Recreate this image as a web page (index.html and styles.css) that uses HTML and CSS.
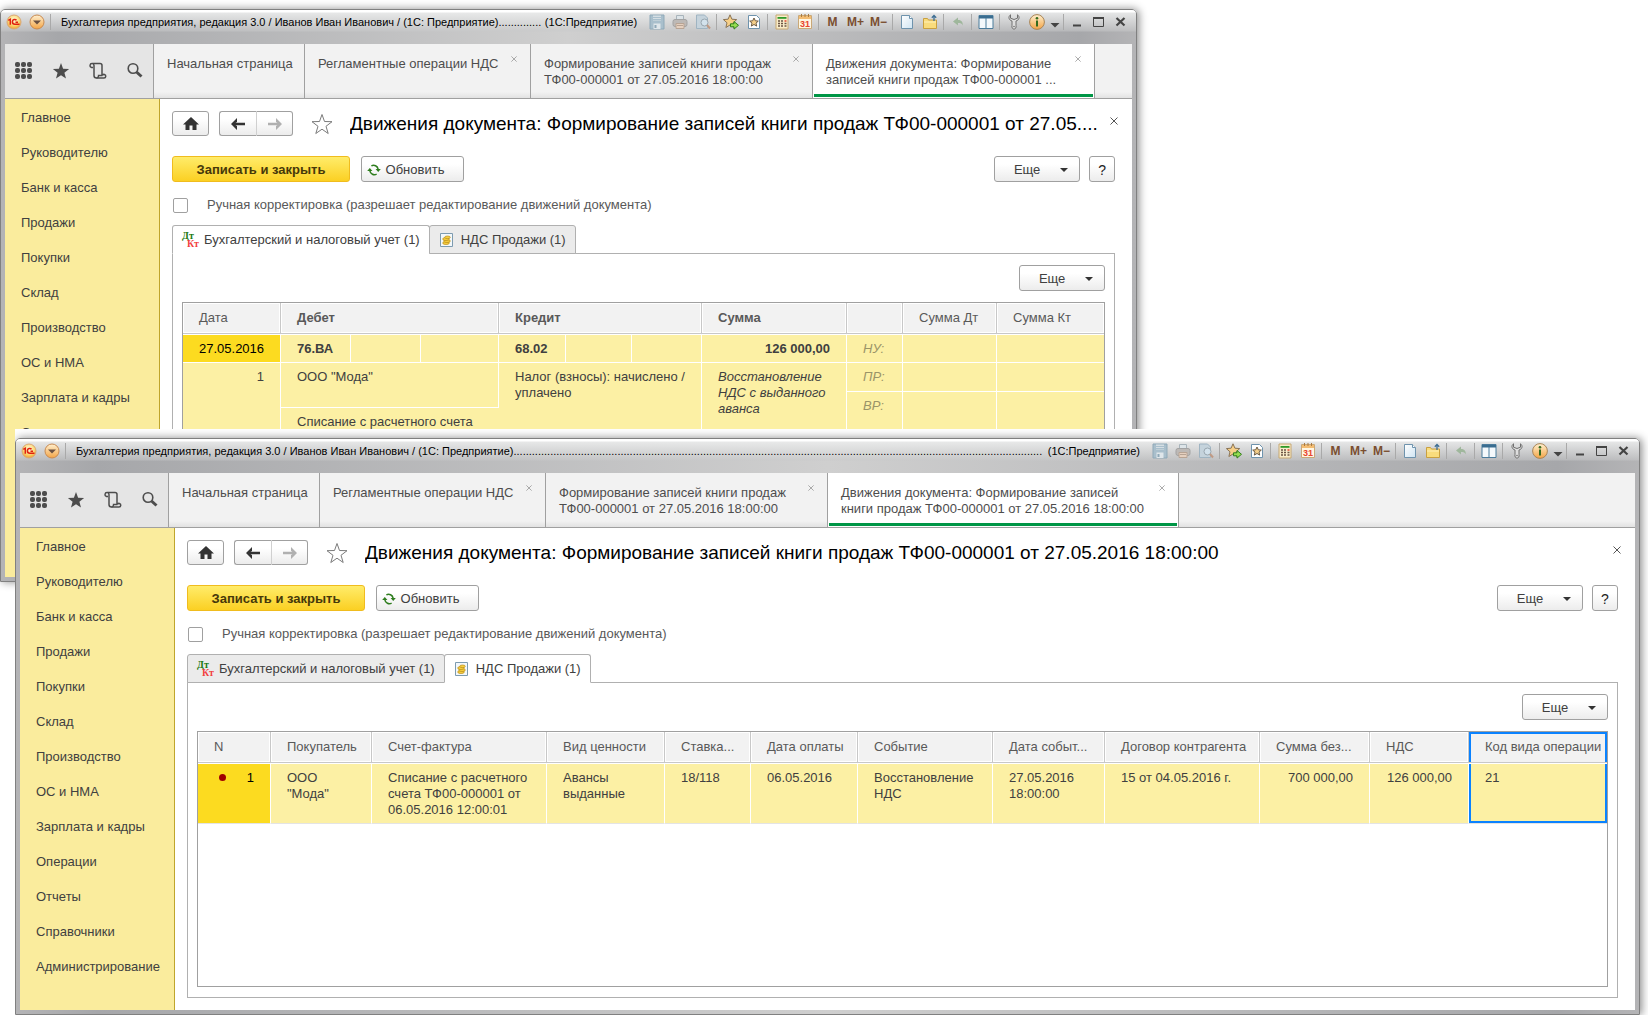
FILE: index.html
```html
<!DOCTYPE html>
<html lang="ru">
<head>
<meta charset="utf-8">
<title>Бухгалтерия предприятия</title>
<link rel="stylesheet" href="styles.css">
</head>
<body>
<svg class="sprite" aria-hidden="true">
  <defs>
    <radialGradient id="g-gold" cx="50%" cy="35%" r="65%"><stop offset="0" stop-color="#fffbe0"/><stop offset=".6" stop-color="#fbd873"/><stop offset="1" stop-color="#f0a030"/></radialGradient>
    <linearGradient id="g-orange" x1="0" y1="0" x2="0" y2="1"><stop offset="0" stop-color="#fff0d0"/><stop offset="1" stop-color="#f3a445"/></linearGradient>
    <linearGradient id="g-page" x1="0" y1="0" x2="1" y2="1"><stop offset="0" stop-color="#fff"/><stop offset="1" stop-color="#cfe4f2"/></linearGradient>
  </defs>
  <symbol id="i-logo" viewBox="0 0 16 16"><circle cx="8" cy="8" r="7" fill="url(#g-gold)" stroke="#d9a878"/><path d="M2.300 6.300 4.300 5.200v5.600M10.500 6.300C9.300 4.900 6.400 5.300 6.400 7.800c0 1.900 1.300 2.500 2.400 2.500H13.500M9.500 8.200H12" fill="none" stroke="#e02010" stroke-width="1.500"/></symbol>
  <symbol id="i-menu" viewBox="0 0 16 16"><circle cx="8" cy="8" r="7" fill="url(#g-orange)" stroke="#c98a50"/><path d="M4 6.500h8l-4 4z" fill="#6b5040"/></symbol>
  <symbol id="i-save" viewBox="0 0 16 16"><path d="M1 1h14v14H1z" fill="#a9bfcc" stroke="#8fa9b8"/><path d="M4 1.500h8v5H4z" fill="#d5dee3"/><path d="M4 3.500h8M4 5.500h8" stroke="#a9bfcc"/><path d="M4.500 9.500h7V15h-7z" fill="#dfe6ea"/><path d="M5.500 11h2v3h-2z" fill="#8fa9b8"/></symbol>
  <symbol id="i-print" viewBox="0 0 16 16"><path d="M4.500 1.500h7V6h-7z" fill="#dde4e8" stroke="#a8b4bb"/><rect x="1" y="5.500" width="14" height="7" rx="2" fill="#bdb9b6" stroke="#a3a3a3"/><path d="M4 9.500h8v5H4z" fill="#e5d0bf" stroke="#b8a494"/><path d="M5 11.500h6" stroke="#b8a494"/></symbol>
  <symbol id="i-preview" viewBox="0 0 16 16"><path d="M1.500 1h8l3 3v10.500h-11z" fill="#c5d3dc" stroke="#9fb4c2"/><circle cx="9.500" cy="8.500" r="3.500" fill="#d3e2ec" stroke="#9aa7b0"/><path d="m12 11 3 3.500" stroke="#c09a84" stroke-width="2"/></symbol>
  <symbol id="i-favadd" viewBox="0 0 16 16"><path d="m7 .8 1.900 4.400 4.800.4-3.600 3.200 1.100 4.700L7 11l-4.100 2.500L4 8.800.4 5.600l4.700-.4z" fill="#f7cf87" stroke="#8a7455"/><path d="M7.500 9.800h3.500V7.500l4.500 3.800-4.500 3.800v-2.300H7.500z" fill="#96dd52" stroke="#32801c"/></symbol>
  <symbol id="i-fav" viewBox="0 0 16 16"><path d="M2.500 1.500h8l3 3v10h-11z" fill="#fff" stroke="#6e93ad"/><path d="m8 4 1.300 2.800 3 .3-2.300 2 .7 3L8 10.500 5.300 12.100l.7-3-2.300-2 3-.3z" fill="#f4cf8a" stroke="#6b5a44"/></symbol>
  <symbol id="i-calc" viewBox="0 0 16 16"><path d="M2 1h12v14H2z" fill="#f9ecc9" stroke="#c7a873"/><path d="M3.500 3h9v1.800h-9z" fill="#2f9a28"/><path d="M4 7h2M4 9.500h2M4 12h2M7 7h2M7 9.500h2M7 12h2" stroke="#6b5444" stroke-width="1.400"/><path d="M10.500 7h2" stroke="#e03a20" stroke-width="1.400"/><path d="M10.500 9.500h2M10.500 12h2" stroke="#6b5444" stroke-width="1.400"/></symbol>
  <symbol id="i-cal" viewBox="0 0 16 16"><path d="M1.500 1.500h13v13h-13z" fill="#fff6e2" stroke="#c9a878"/><path d="M2 2h12v3H2z" fill="#f4bd72"/><path d="M4.500 0v3M8 0v3M11.500 0v3" stroke="#aa7a40"/><text x="8" y="13" text-anchor="middle" class="icon-day">31</text></symbol>
  <symbol id="i-page" viewBox="0 0 16 16"><path d="M2.500 1.500h8l3 3v10h-11z" fill="url(#g-page)" stroke="#6e93ad"/><path d="M10.500 1.500v3h3" fill="#fff" stroke="#6e93ad"/></symbol>
  <symbol id="i-folder" viewBox="0 0 16 16"><path d="M1.500 4.500h4l1 1.500h8v8.500h-13z" fill="#f9dc7c" stroke="#c9a040"/><path d="M2 8h12" stroke="#fff0b8"/><path d="M12 7V1.500M9.800 3.800 12 1.500l2.200 2.300" fill="none" stroke="#3f6f94" stroke-width="1.300"/></symbol>
  <symbol id="i-undo" viewBox="0 0 16 16"><path d="M3 7.500 8 3.500v2.500c3 0 5 1.500 4.800 5.500C12 9.500 10.500 9 8 9v2.500z" fill="#9fb79c"/></symbol>
  <symbol id="i-cols" viewBox="0 0 16 16"><path d="M1 1.500h14v13H1z" fill="#f4f9fc" stroke="#4b7c9c"/><path d="M1 2h14v2.500H1z" fill="#3a6d90"/><path d="M8 4v10.500" stroke="#4b7c9c"/></symbol>
  <symbol id="i-wrench" viewBox="0 0 16 16"><path d="M4.500.8C2 2.500 2.500 6 6 7v4.500c-.6 2 .8 3.700 2 3.700s2.600-1.700 2-3.700V7c3.500-1 4-4.500 1.500-6.200v3.400L8 5.500 4.500 4.200z" fill="#dedede" stroke="#707070"/><circle cx="8" cy="12.500" r=".8" fill="#707070"/></symbol>
  <symbol id="i-info" viewBox="0 0 16 16"><circle cx="8" cy="8" r="7.400" fill="url(#g-orange)" stroke="#a88558"/><circle cx="8" cy="4.300" r="1.300" fill="#346b1e"/><path d="M8 6.500v6" stroke="#346b1e" stroke-width="2"/></symbol>
  <symbol id="i-more" viewBox="0 0 16 16"><path d="M3.500 9h9L8 13.500z" fill="#444"/></symbol>
  <symbol id="i-min" viewBox="0 0 16 16"><path d="M4 11.500h8" stroke="#444" stroke-width="2"/></symbol>
  <symbol id="i-max" viewBox="0 0 16 16"><path d="M2.500 3.500h10v9h-10z" fill="none" stroke="#444"/><path d="M2 4h11" stroke="#444" stroke-width="2"/></symbol>
  <symbol id="i-x" viewBox="0 0 16 16"><path d="m3.500 4 8 7.500m0-7.500-8 7.500" stroke="#444" stroke-width="2.200"/></symbol>
  <symbol id="i-grid" viewBox="0 0 18 18"><g fill="#4d4d4d"><rect x="0" y="0" width="5" height="5" rx="2"/><rect x="6" y="0" width="5" height="5" rx="2"/><rect x="12" y="0" width="5" height="5" rx="2"/><rect x="0" y="6" width="5" height="5" rx="2"/><rect x="6" y="6" width="5" height="5" rx="2"/><rect x="12" y="6" width="5" height="5" rx="2"/><rect x="0" y="12" width="5" height="5" rx="2"/><rect x="6" y="12" width="5" height="5" rx="2"/><rect x="12" y="12" width="5" height="5" rx="2"/></g></symbol>
  <symbol id="i-star" viewBox="0 0 18 18"><path d="m9 1 2.100 5.700 6 .2-4.700 3.800 1.600 5.900L9 13.200l-5 3.400 1.600-5.900L.9 6.900l6-.2z" fill="#4d4d4d"/></symbol>
  <symbol id="i-scroll" viewBox="0 0 18 18"><path d="M4 5.500H2.500a2 2 0 1 1 2.500-2V13.500a2.500 2.500 0 0 0 2.500 2.500h7.500a1.800 1.800 0 1 0-1.700-2.500M3.500 1.500H11a2 2 0 0 1 2 2V13" fill="none" stroke="#4d4d4d" stroke-width="1.500"/><path d="M7.500 16a2.300 2.300 0 0 0 2-2.500h4" fill="none" stroke="#4d4d4d" stroke-width="1.300"/></symbol>
  <symbol id="i-find" viewBox="0 0 18 18"><circle cx="7" cy="6.500" r="4.800" fill="none" stroke="#4d4d4d" stroke-width="1.600"/><path d="m10.500 10 5 4.500" stroke="#4d4d4d" stroke-width="3"/></symbol>
  <symbol id="i-home" viewBox="0 0 16 14"><path d="M8 0 16 7.500H13.500V13H9.500V8.500h-3V13h-4V7.500H0z" fill="#333"/></symbol>
  <symbol id="i-back" viewBox="0 0 16 14"><path d="M7 1 1 7l6 6V9L5.500 8.200H15V5.800H5.500L7 5z" fill="#333"/></symbol>
  <symbol id="i-forward" viewBox="0 0 16 14"><path d="m9 1 6 6-6 6V9l1.500-.8H1V5.800h9.500L9 5z" fill="#b0b0b0"/></symbol>
  <symbol id="i-outline" viewBox="0 0 22 22"><path d="m11 1.500 2.500 7 7.500.2-6 4.600 2.200 7.200-6.200-4.300-6.200 4.300L7 13.300 1 8.700l7.500-.2z" fill="#fff" stroke="#7a7a7a"/></symbol>
  <symbol id="i-refresh" viewBox="0 0 16 14"><g fill="none" stroke="#2e7d1e" stroke-width="1.700"><path d="M5 2.300A5.200 5.200 0 0 1 12.700 6M11 11.700A5.200 5.200 0 0 1 3.300 8"/></g><path d="M9.800 5.800H15.800L12.800 9.300zM.2 8.200H6.200L3.200 4.700z" fill="#2e7d1e"/></symbol>
  <symbol id="i-dtkt" viewBox="0 0 18 16"><text x="0" y="7" class="icon-dt">Дт</text><text x="5" y="15" class="icon-kt">Кт</text></symbol>
  <symbol id="i-coins" viewBox="0 0 14 14"><path d="M.5.500h12v13H.500z" fill="#f3f8fb" stroke="#7d9bb0"/><g fill="#f7d040" stroke="#b88a18" stroke-width=".7"><ellipse cx="6" cy="10" rx="3.300" ry="1.500"/><ellipse cx="7" cy="8" rx="3.300" ry="1.500"/><ellipse cx="6" cy="6" rx="3.300" ry="1.500"/><ellipse cx="7.500" cy="4.300" rx="2.800" ry="1.300"/></g></symbol>
  <symbol id="i-close" viewBox="0 0 8 8"><path d="m.5.500 7 7m0-7-7 7" stroke="currentColor"/></symbol>
</svg>

<main class="desktop">

<section class="window window--back">
  <header class="titlebar">
    <button class="tool" aria-label="1С"><svg><use href="#i-logo"/></svg></button>
    <button class="tool" aria-label="Меню"><svg><use href="#i-menu"/></svg></button>
    <span class="sep"></span>
    <span class="caption">Бухгалтерия предприятия, редакция 3.0 / Иванов Иван Иванович / (1С: Предприятие)..............</span>
    <span class="product">(1С:Предприятие)</span>
    <button class="tool" aria-label="Сохранить" disabled><svg><use href="#i-save"/></svg></button>
    <button class="tool" aria-label="Печать" disabled><svg><use href="#i-print"/></svg></button>
    <button class="tool" aria-label="Просмотр" disabled><svg><use href="#i-preview"/></svg></button>
    <span class="sep"></span>
    <button class="tool" aria-label="Добавить в избранное"><svg><use href="#i-favadd"/></svg></button>
    <button class="tool" aria-label="Избранное"><svg><use href="#i-fav"/></svg></button>
    <span class="sep"></span>
    <button class="tool" aria-label="Калькулятор"><svg><use href="#i-calc"/></svg></button>
    <button class="tool" aria-label="Календарь"><svg><use href="#i-cal"/></svg></button>
    <span class="sep"></span>
    <button class="tool">M</button>
    <button class="tool">M+</button>
    <button class="tool">M−</button>
    <span class="sep"></span>
    <button class="tool" aria-label="Новый"><svg><use href="#i-page"/></svg></button>
    <button class="tool" aria-label="Открыть"><svg><use href="#i-folder"/></svg></button>
    <span class="sep"></span>
    <button class="tool" aria-label="Отменить" disabled><svg><use href="#i-undo"/></svg></button>
    <span class="sep"></span>
    <button class="tool" aria-label="Панели"><svg><use href="#i-cols"/></svg></button>
    <span class="sep"></span>
    <button class="tool" aria-label="Настройка"><svg><use href="#i-wrench"/></svg></button>
    <button class="tool" aria-label="Справка"><svg><use href="#i-info"/></svg></button>
    <button class="tool tool--narrow" aria-label="Ещё"><svg><use href="#i-more"/></svg></button>
    <span class="sep"></span>
    <button class="tool tool--frame" aria-label="Свернуть"><svg><use href="#i-min"/></svg></button>
    <button class="tool tool--frame" aria-label="Развернуть"><svg><use href="#i-max"/></svg></button>
    <button class="tool tool--frame" aria-label="Закрыть"><svg><use href="#i-x"/></svg></button>
  </header>

  <div class="client">
    <div class="strip">
      <div class="quick">
        <button aria-label="Разделы"><svg><use href="#i-grid"/></svg></button>
        <button aria-label="Избранное"><svg><use href="#i-star"/></svg></button>
        <button aria-label="История"><svg><use href="#i-scroll"/></svg></button>
        <button aria-label="Поиск"><svg><use href="#i-find"/></svg></button>
      </div>
      <div class="tab tab--start">Начальная страница</div>
      <div class="tab tab--short">Регламентные операции НДС<button class="tab-close" aria-label="Закрыть"><svg><use href="#i-close"/></svg></button></div>
      <div class="tab tab--doc">Формирование записей книги продаж<br>ТФ00-000001 от 27.05.2016 18:00:00<button class="tab-close" aria-label="Закрыть"><svg><use href="#i-close"/></svg></button></div>
      <div class="tab tab--doc tab--active">Движения документа: Формирование<br>записей книги продаж ТФ00-000001 ...<button class="tab-close" aria-label="Закрыть"><svg><use href="#i-close"/></svg></button></div>
    </div>
    <div class="work">
      <nav class="sections">
        <a href="#">Главное</a>
        <a href="#">Руководителю</a>
        <a href="#">Банк и касса</a>
        <a href="#">Продажи</a>
        <a href="#">Покупки</a>
        <a href="#">Склад</a>
        <a href="#">Производство</a>
        <a href="#">ОС и НМА</a>
        <a href="#">Зарплата и кадры</a>
        <a href="#">Операции</a>
      </nav>
      <div class="form">
        <div class="form-head">
          <button class="btn btn--nav" aria-label="Домой"><svg><use href="#i-home"/></svg></button>
          <div class="pair">
            <button class="btn btn--nav" aria-label="Назад"><svg><use href="#i-back"/></svg></button>
            <button class="btn btn--nav" aria-label="Вперед" disabled><svg><use href="#i-forward"/></svg></button>
          </div>
          <button class="star" aria-label="В избранное"><svg><use href="#i-outline"/></svg></button>
          <h1>Движения документа: Формирование записей книги продаж ТФ00-000001 от 27.05....</h1>
          <button class="form-close" aria-label="Закрыть"><svg><use href="#i-close"/></svg></button>
        </div>
        <div class="commands">
          <button class="btn btn--primary">Записать и закрыть</button>
          <button class="btn btn--refresh"><svg><use href="#i-refresh"/></svg>Обновить</button>
          <button class="btn btn--more">Еще</button>
          <button class="btn btn--help">?</button>
        </div>
        <label class="manual"><input type="checkbox">Ручная корректировка (разрешает редактирование движений документа)</label>
        <div class="pages">
          <button class="page page--active"><svg class="ic-dtkt"><use href="#i-dtkt"/></svg>Бухгалтерский и налоговый учет (1)</button>
          <button class="page"><svg class="ic-coins"><use href="#i-coins"/></svg>НДС Продажи (1)</button>
        </div>
        <div class="panel">
          <button class="btn btn--more">Еще</button>
          <div class="grid-box">
            <table class="grid entries">
              <colgroup><col><col><col><col><col><col><col><col><col><col><col></colgroup>
              <thead>
                <tr><th>Дата</th><th colspan="3" class="strong">Дебет</th><th colspan="3" class="strong">Кредит</th><th class="strong">Сумма</th><th></th><th>Сумма Дт</th><th>Сумма Кт</th></tr>
              </thead>
              <tbody>
                <tr><td class="current">27.05.2016</td><td class="strong">76.ВА</td><td></td><td></td><td class="strong">68.02</td><td></td><td></td><td class="strong num">126 000,00</td><td class="hint">НУ:</td><td></td><td></td></tr>
                <tr class="short"><td rowspan="3" class="num">1</td><td colspan="3" rowspan="2" class="analytic">ООО "Мода"</td><td colspan="3" rowspan="3">Налог (взносы): начислено / уплачено</td><td rowspan="3" class="note">Восстановление НДС с выданного аванса</td><td class="hint">ПР:</td><td></td><td></td></tr>
                <tr class="thin"><td rowspan="2" class="hint">ВР:</td><td rowspan="2"></td><td rowspan="2"></td></tr>
                <tr class="tall"><td colspan="3">Списание с расчетного счета</td></tr>
              </tbody>
            </table>
          </div>
        </div>
      </div>
    </div>
  </div>
</section>

<div class="overlay">
<section class="window window--front">
  <header class="titlebar">
    <button class="tool" aria-label="1С"><svg><use href="#i-logo"/></svg></button>
    <button class="tool" aria-label="Меню"><svg><use href="#i-menu"/></svg></button>
    <span class="sep"></span>
    <span class="caption">Бухгалтерия предприятия, редакция 3.0 / Иванов Иван Иванович / (1С: Предприятие).............................................................................................................................................................................</span>
    <span class="product">(1С:Предприятие)</span>
    <button class="tool" aria-label="Сохранить" disabled><svg><use href="#i-save"/></svg></button>
    <button class="tool" aria-label="Печать" disabled><svg><use href="#i-print"/></svg></button>
    <button class="tool" aria-label="Просмотр" disabled><svg><use href="#i-preview"/></svg></button>
    <span class="sep"></span>
    <button class="tool" aria-label="Добавить в избранное"><svg><use href="#i-favadd"/></svg></button>
    <button class="tool" aria-label="Избранное"><svg><use href="#i-fav"/></svg></button>
    <span class="sep"></span>
    <button class="tool" aria-label="Калькулятор"><svg><use href="#i-calc"/></svg></button>
    <button class="tool" aria-label="Календарь"><svg><use href="#i-cal"/></svg></button>
    <span class="sep"></span>
    <button class="tool">M</button>
    <button class="tool">M+</button>
    <button class="tool">M−</button>
    <span class="sep"></span>
    <button class="tool" aria-label="Новый"><svg><use href="#i-page"/></svg></button>
    <button class="tool" aria-label="Открыть"><svg><use href="#i-folder"/></svg></button>
    <span class="sep"></span>
    <button class="tool" aria-label="Отменить" disabled><svg><use href="#i-undo"/></svg></button>
    <span class="sep"></span>
    <button class="tool" aria-label="Панели"><svg><use href="#i-cols"/></svg></button>
    <span class="sep"></span>
    <button class="tool" aria-label="Настройка"><svg><use href="#i-wrench"/></svg></button>
    <button class="tool" aria-label="Справка"><svg><use href="#i-info"/></svg></button>
    <button class="tool tool--narrow" aria-label="Ещё"><svg><use href="#i-more"/></svg></button>
    <span class="sep"></span>
    <button class="tool tool--frame" aria-label="Свернуть"><svg><use href="#i-min"/></svg></button>
    <button class="tool tool--frame" aria-label="Развернуть"><svg><use href="#i-max"/></svg></button>
    <button class="tool tool--frame" aria-label="Закрыть"><svg><use href="#i-x"/></svg></button>
  </header>

  <div class="client">
    <div class="strip">
      <div class="quick">
        <button aria-label="Разделы"><svg><use href="#i-grid"/></svg></button>
        <button aria-label="Избранное"><svg><use href="#i-star"/></svg></button>
        <button aria-label="История"><svg><use href="#i-scroll"/></svg></button>
        <button aria-label="Поиск"><svg><use href="#i-find"/></svg></button>
      </div>
      <div class="tab tab--start">Начальная страница</div>
      <div class="tab tab--short">Регламентные операции НДС<button class="tab-close" aria-label="Закрыть"><svg><use href="#i-close"/></svg></button></div>
      <div class="tab tab--doc">Формирование записей книги продаж<br>ТФ00-000001 от 27.05.2016 18:00:00<button class="tab-close" aria-label="Закрыть"><svg><use href="#i-close"/></svg></button></div>
      <div class="tab tab--wide tab--active">Движения документа: Формирование записей<br>книги продаж ТФ00-000001 от 27.05.2016 18:00:00<button class="tab-close" aria-label="Закрыть"><svg><use href="#i-close"/></svg></button></div>
    </div>
    <div class="work">
      <nav class="sections">
        <a href="#">Главное</a>
        <a href="#">Руководителю</a>
        <a href="#">Банк и касса</a>
        <a href="#">Продажи</a>
        <a href="#">Покупки</a>
        <a href="#">Склад</a>
        <a href="#">Производство</a>
        <a href="#">ОС и НМА</a>
        <a href="#">Зарплата и кадры</a>
        <a href="#">Операции</a>
        <a href="#">Отчеты</a>
        <a href="#">Справочники</a>
        <a href="#">Администрирование</a>
      </nav>
      <div class="form">
        <div class="form-head">
          <button class="btn btn--nav" aria-label="Домой"><svg><use href="#i-home"/></svg></button>
          <div class="pair">
            <button class="btn btn--nav" aria-label="Назад"><svg><use href="#i-back"/></svg></button>
            <button class="btn btn--nav" aria-label="Вперед" disabled><svg><use href="#i-forward"/></svg></button>
          </div>
          <button class="star" aria-label="В избранное"><svg><use href="#i-outline"/></svg></button>
          <h1>Движения документа: Формирование записей книги продаж ТФ00-000001 от 27.05.2016 18:00:00</h1>
          <button class="form-close" aria-label="Закрыть"><svg><use href="#i-close"/></svg></button>
        </div>
        <div class="commands">
          <button class="btn btn--primary">Записать и закрыть</button>
          <button class="btn btn--refresh"><svg><use href="#i-refresh"/></svg>Обновить</button>
          <button class="btn btn--more">Еще</button>
          <button class="btn btn--help">?</button>
        </div>
        <label class="manual"><input type="checkbox">Ручная корректировка (разрешает редактирование движений документа)</label>
        <div class="pages">
          <button class="page"><svg class="ic-dtkt"><use href="#i-dtkt"/></svg>Бухгалтерский и налоговый учет (1)</button>
          <button class="page page--active"><svg class="ic-coins"><use href="#i-coins"/></svg>НДС Продажи (1)</button>
        </div>
        <div class="panel">
          <button class="btn btn--more">Еще</button>
          <div class="grid-box">
            <table class="grid sales">
              <colgroup><col><col><col><col><col><col><col><col><col><col><col><col></colgroup>
              <thead>
                <tr><th>N</th><th>Покупатель</th><th>Счет-фактура</th><th>Вид ценности</th><th>Ставка...</th><th>Дата оплаты</th><th>Событие</th><th>Дата событ...</th><th>Договор контрагента</th><th>Сумма без...</th><th>НДС</th><th class="picked">Код вида операции</th></tr>
              </thead>
              <tbody>
                <tr><td class="current num"><span class="mark"></span>1</td><td>ООО<br>"Мода"</td><td>Списание с расчетного счета ТФ00-000001 от 06.05.2016 12:00:01</td><td>Авансы выданные</td><td>18/118</td><td>06.05.2016</td><td>Восстановление НДС</td><td>27.05.2016 18:00:00</td><td>15 от 04.05.2016 г.</td><td class="num">700 000,00</td><td class="num">126 000,00</td><td class="picked">21</td></tr>
              </tbody>
            </table>
          </div>
        </div>
      </div>
    </div>
  </div>
</section>
</div>

</main>
</body>
</html>
```
FILE: styles.css
```css
* { box-sizing: border-box; }

body {
  margin: 0;
  background: #fff;
  color: #404040;
  font: 13px/16px "Liberation Sans", Arial, sans-serif;
}

button {
  margin: 0;
  padding: 0;
  border: 0;
  background: none;
  color: inherit;
  font: inherit;
}

.sprite { position: absolute; width: 0; height: 0; }
svg, symbol { overflow: visible; }

.icon-day { font: bold 9px "Liberation Sans", sans-serif; fill: #e8442c; }
.icon-dt, .icon-kt { font: bold 10px "Liberation Serif", serif; }
.icon-dt { fill: #1c7a12; }
.icon-kt { fill: #f24040; }

/* Overlapping windows */
.desktop {
  position: relative;
  min-height: 100vh;
  overflow: hidden;
}

.window {
  display: flex;
  flex-direction: column;
  padding: 0 4px 4px;
  border: 1px solid #808080;
  border-radius: 5px 5px 0 0;
  background: linear-gradient(90deg, #b4b4b6 0, #a6a7aa 5%, #cfcfcf 50%, #a6a7aa 95%, #b4b4b6 100%);
  box-shadow: 2px 0 9px rgba(0, 0, 0, .45);
}

.window--back {
  position: absolute;
  top: 9px;
  left: 0;
  width: 69%;
  height: 573px;
}

.overlay {
  position: absolute;
  top: 429px;
  right: 0;
  bottom: 0;
  left: 15px;
  display: flex;
  padding: 9px 8px 0 0;
  background: #fff;
  overflow: hidden;
}

.window--front { flex: 1; min-width: 0; }

/* Title bar */
.titlebar {
  display: flex;
  align-items: center;
  flex: none;
  height: 34px;
  margin: 0 -4px;
  padding: 0 4px 10px 1px;
  border-radius: 4px 4px 0 0;
  background: linear-gradient(#fff 0, #fff 2px, rgba(235, 236, 236, .9) 3px, rgba(200, 201, 202, .5) 21px, transparent 22px);
  color: #000;
  font-size: 11px;
}

.tool {
  display: flex;
  align-items: center;
  justify-content: center;
  flex: none;
  width: 23px;
  height: 22px;
  color: #7a4e30;
  font-size: 12px;
  font-weight: bold;
}
.tool svg { width: 16px; height: 16px; }
.tool--narrow { width: 13px; }
.tool--frame { width: 22px; }

.sep {
  flex: none;
  width: 1px;
  height: 16px;
  margin: 0 2px;
  background: #a9a9a9;
}

.caption {
  flex: 1;
  min-width: 0;
  margin-left: 8px;
  overflow: hidden;
  white-space: nowrap;
}
.product { flex: none; margin: 0 8px 0 4px; }

/* Client area */
.client {
  display: flex;
  flex-direction: column;
  flex: 1;
  min-height: 0;
  background: #fff;
}

.strip {
  display: flex;
  flex: none;
  height: 55px;
  border-bottom: 1px solid #a0a0a0;
  background: linear-gradient(#f2f2f2 48px, #e2e2e2);
  color: #4d4d4d;
}

.quick {
  display: flex;
  width: 149px;
  border-right: 1px solid #a0a0a0;
  background: #e5e5e5;
}
.quick button { display: flex; flex: 1; align-items: center; justify-content: center; }
.quick svg { width: 18px; height: 18px; }

.tab {
  position: relative;
  flex: none;
  padding: 12px 0 0 13px;
  border-right: 1px solid #a0a0a0;
  white-space: nowrap;
}
.tab--start { width: 151px; }
.tab--short { width: 226px; }
.tab--doc { width: 282px; }
.tab--wide { width: 351px; }
.tab--active { background: linear-gradient(#009646, #009646) 1px 50px / calc(100% - 2px) 3px no-repeat #fff; }

.tab-close {
  position: absolute;
  top: 12px;
  right: 13px;
  display: flex;
  color: #909090;
}
.tab-close svg { width: 6px; height: 6px; }

.work { display: flex; flex: 1; min-height: 0; }

.sections {
  flex: none;
  width: 155px;
  padding-top: 1px;
  border-right: 1px solid #bfa52c;
  background: #faec9d;
}
.sections a {
  display: block;
  padding-left: 16px;
  color: #404040;
  line-height: 35px;
  text-decoration: none;
}

/* Form */
.form {
  display: flex;
  flex-direction: column;
  flex: 1;
  min-width: 0;
  padding: 12px 17px 12px 12px;
}

.form-head, .commands { display: flex; align-items: center; }

.btn {
  display: flex;
  align-items: center;
  justify-content: center;
  height: 26px;
  border: 1px solid #a0a0a0;
  border-radius: 3px;
  background: linear-gradient(#fff 30%, #ececec);
}
.btn--nav { width: 37px; height: 25px; }
.btn--nav svg { width: 16px; height: 14px; }

.pair { display: flex; margin-left: 10px; }
.pair .btn:first-child { width: 38px; border-radius: 3px 0 0 3px; border-right-color: #d0d0d0; }
.pair .btn:last-child { width: 36px; border-left: 0; border-radius: 0 3px 3px 0; }

.star { display: flex; margin-left: 18px; }
.star svg { width: 22px; height: 22px; }

h1 {
  flex: 1;
  min-width: 0;
  margin: 0 0 0 17px;
  overflow: hidden;
  color: #000;
  font-size: 19px;
  font-weight: normal;
  line-height: 27px;
  white-space: nowrap;
}
.form-head { height: 25px; }

.form-close { display: flex; align-self: flex-start; margin-right: -3px; padding: 6px 0 0 8px; color: #555; }
.form-close svg { width: 8px; height: 8px; }

.commands { margin-top: 20px; }
.commands .btn, .panel > .btn { padding-top: 1px; }
.btn--primary {
  width: 178px;
  border-color: #f0bc1e;
  background: linear-gradient(#ffec6a, #fbd023);
  color: #46380a;
  font-weight: bold;
}
.btn--refresh { gap: 5px; width: 103px; margin-left: 11px; padding-right: 14px; }
.btn--refresh svg { width: 14px; height: 14px; }
.btn--more { gap: 20px; width: 86px; padding-left: 8px; }
.btn--more::after {
  content: "";
  border: 4px solid transparent;
  border-top-color: #333;
  border-bottom-width: 0;
}
.commands .btn--more { margin-left: auto; }
.btn--help { width: 26px; margin-left: 9px; color: #222; font-size: 14px; }

.manual {
  display: flex;
  align-items: center;
  gap: 19px;
  height: 20px;
  margin: 13px 0 0 1px;
  color: #595959;
}
.manual input {
  appearance: none;
  width: 15px;
  height: 15px;
  margin: 0;
  border: 1px solid #a0a0a0;
  border-radius: 2px;
  background: #fff;
}

.pages { display: flex; margin-top: 10px; }
.page {
  z-index: 1;
  display: flex;
  align-items: center;
  height: 29px;
  margin-bottom: -1px;
  padding: 0 9px;
  border: 1px solid #b0b0b0;
  border-radius: 3px 3px 0 0;
  background: #ebebeb;
}
.page + .page { margin-left: -1px; }
.page--active { border-bottom-color: #fff; background: #fff; }
.ic-dtkt { width: 18px; height: 16px; margin-right: 4px; }
.ic-coins { width: 14px; height: 14px; margin: 0 7px 0 1px; }

.panel {
  display: flex;
  flex-direction: column;
  align-items: flex-end;
  flex: 1;
  min-height: 0;
  padding: 11px 9px 10px;
  border: 1px solid #b0b0b0;
}

.grid-box {
  flex: 1;
  width: 100%;
  min-height: 0;
  margin-top: 11px;
  border: 1px solid #a0a0a0;
  overflow: hidden;
}

/* Data tables */
.grid {
  width: 100%;
  border-collapse: separate;
  border-spacing: 0;
  table-layout: fixed;
}
.grid th {
  height: 31px;
  padding: 0 0 0 16px;
  border: solid #c8c8c8;
  border-width: 0 1px 1px 0;
  background: #f2f2f2;
  box-shadow: inset 0 0 0 1px #fff;
  color: #595959;
  font-weight: normal;
  text-align: left;
  white-space: nowrap;
}
.grid td {
  height: 29px;
  padding: 6px 8px 4px 16px;
  border: solid #fff;
  border-width: 0 1px 1px 0;
  background: #fcf0a4;
  vertical-align: top;
}
.grid tbody tr:first-child td { border-top-width: 1px; }
.grid th:last-child, .grid td:last-child { border-right-width: 0; }
.grid .strong { font-weight: bold; }
.grid .num { padding-right: 16px; text-align: right; }
.grid .current { background: #fcdb20; color: #000; }
.grid .hint { color: #9a9468; font-style: italic; }
.grid .note { font-style: italic; }
.grid .short { height: 29px; }
.grid .thin { height: 16px; }
.grid .thin td { height: 96px; }
.grid .short .analytic { height: 45px; }
.grid .tall td { height: 80px; }

.entries .current { padding-right: 0; }
.entries col:nth-child(1) { width: 98px; }
.entries col:nth-child(2) { width: 70px; }
.entries col:nth-child(3) { width: 70px; }
.entries col:nth-child(4) { width: 78px; }
.entries col:nth-child(5) { width: 67px; }
.entries col:nth-child(6) { width: 66px; }
.entries col:nth-child(7) { width: 70px; }
.entries col:nth-child(8) { width: 145px; }
.entries col:nth-child(9) { width: 56px; }
.entries col:nth-child(10) { width: 94px; }
.entries col:nth-child(11) { width: 107px; }

.sales tbody td { height: 61px; border-bottom: 1px solid #e4e4e4; }
.sales .mark {
  float: left;
  width: 7px;
  height: 7px;
  margin: 4px 0 0 5px;
  border-radius: 50%;
  background: #a00000;
}
.grid th.picked { box-shadow: inset 2px 0 #0a82ff, inset -2px 0 #0a82ff, inset 0 2px #0a82ff; }
.grid td.picked { box-shadow: inset 2px 0 #0a82ff, inset -2px 0 #0a82ff, inset 0 -2px #0a82ff; }
.sales col:nth-child(1) { width: 73px; }
.sales col:nth-child(2) { width: 101px; }
.sales col:nth-child(3) { width: 175px; }
.sales col:nth-child(4) { width: 118px; }
.sales col:nth-child(5) { width: 86px; }
.sales col:nth-child(6) { width: 107px; }
.sales col:nth-child(7) { width: 135px; }
.sales col:nth-child(8) { width: 112px; }
.sales col:nth-child(9) { width: 155px; }
.sales col:nth-child(10) { width: 110px; }
.sales col:nth-child(11) { width: 99px; }
.sales col:nth-child(12) { width: 138px; }
```
